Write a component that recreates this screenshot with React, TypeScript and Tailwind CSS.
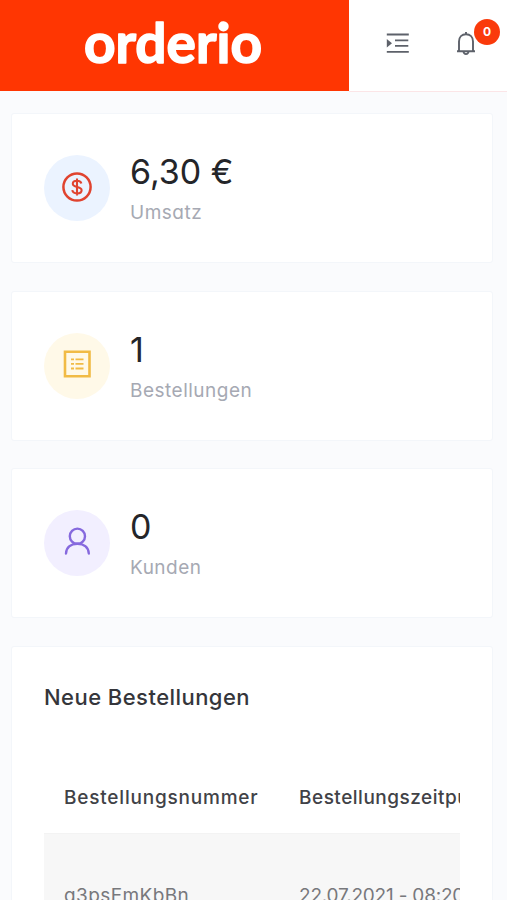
import React from 'react';

interface StatCardProps {
  value: string;
  label: string;
  iconBg: string;
  icon: React.ReactNode;
}

const DollarIcon = () => (
  <svg width="32" height="32" viewBox="0 0 32 32" fill="none" stroke="#e0432f" strokeWidth="2.5">
    <circle cx="16" cy="16" r="13.6" />
    <path d="M20.3 12.5c-.3-1.9-2-2.8-4.3-2.8-2.5 0-4.2 1.1-4.2 3 0 4.5 8.8 2 8.8 6.5 0 2-1.9 3.2-4.5 3.2-2.7 0-4.5-1.1-4.8-3.2M16 7.6v16.8" strokeWidth="2.1" />
  </svg>
);

const ListIcon = () => (
  <svg width="32" height="32" viewBox="0 0 32 32" fill="none" stroke="#f1bb45">
    <path d="M4 3.7h24.5v24.5H4z" strokeWidth="2.6" />
    <path d="M10 11.3h3M10 15.9h3M10 20.5h3M14.5 11.3h8M14.5 15.9h8M14.5 20.5h8" strokeWidth="1.8" />
  </svg>
);

const UserIcon = () => (
  <svg width="32" height="32" viewBox="0 0 32 32" fill="none" stroke="#8669de" strokeWidth="2.4" strokeLinecap="round">
    <circle cx="16.4" cy="10.2" r="7.6" />
    <path d="M5 27.5c.4-6.300 5.100-9.700 11.400-9.700s11 3.400 11.400 9.700" />
  </svg>
);

const IndentIcon = () => (
  <svg width="24" height="24" viewBox="0 0 24 24" fill="none" stroke="#5d616a" strokeWidth="1.8">
    <path d="M.8 3.500h22M9 9.300h13.300M9 14.900h13.300M.8 20.800h22" />
    <path d="M.8 8l5.200 4.200L.8 16.400z" fill="#5d616a" stroke="none" />
  </svg>
);

const BellIcon = () => (
  <svg width="20" height="26" viewBox="0 0 20 26" fill="none" stroke="#5d616a" strokeWidth="1.9">
    <path d="M3 20V10.500C3 6 6 3.200 10 3.200s7 2.800 7 7.300V20M1 20.200h18M10 3.200V1" />
    <path d="M7.500 20.500c.2 1.700 1 2.600 2.500 2.600s2.300-.9 2.500-2.600" />
  </svg>
);

const StatCard: React.FC<StatCardProps> = ({ value, label, iconBg, icon }) => (
  <div className="flex h-[150px] items-center rounded-[3px] border border-[#f3f6fa] bg-white pl-8">
    <div className={`flex size-[66px] items-center justify-center rounded-full pb-[3px] ${iconBg}`}>{icon}</div>
    <div className="ml-5">
      <div className="text-[34px] leading-[42px] text-[#242529]">{value}</div>
      <div className="mt-2 text-[19px] leading-6 tracking-[0.5px] text-[#a6a9b3]">{label}</div>
    </div>
  </div>
);

const STATS: StatCardProps[] = [
  { value: '6,30 €', label: 'Umsatz', iconBg: 'bg-[#ebf3ff]', icon: <DollarIcon /> },
  { value: '1', label: 'Bestellungen', iconBg: 'bg-[#fff9e8]', icon: <ListIcon /> },
  { value: '0', label: 'Kunden', iconBg: 'bg-[#f2efff]', icon: <UserIcon /> },
];

const Header = () => (
  <header className="flex h-[92px]">
    <div className="flex h-[91px] w-[349px] shrink-0 justify-center bg-[#ff3602] pt-[13px]">
      <svg
        width="179"
        height="60"
        className="overflow-visible fill-white stroke-white font-[Lato] text-[56px] font-bold"
        strokeWidth="1.6"
        strokeLinejoin="round"
      >
        <text x="-1" y="50" textLength="178" lengthAdjust="spacingAndGlyphs">orderio</text>
      </svg>
    </div>
    <div className="flex flex-1 border-b border-[#fbe5e7] bg-white pt-[31px] pl-[37px]">
      <IndentIcon />
      <div className="relative ml-[46px] h-[26px] w-5">
        <BellIcon />
        <span className="absolute -top-3 left-[18px] flex size-[26px] items-center justify-center rounded-full bg-[#fa3a0b] pb-px text-xs font-bold text-white">
          0
        </span>
      </div>
    </div>
  </header>
);

const App = () => (
  <div className="h-[900px] w-[507px] overflow-hidden bg-[#fafbfd] font-[Inter,sans-serif] [font-feature-settings:'cv11']">
    <Header />
    <main className="flex flex-col gap-[27.5px] pt-[21px] pr-[14px] pl-[11px]">
      {STATS.map((stat) => (
        <StatCard key={stat.label} {...stat} />
      ))}
      <section className="h-[300px] rounded-[3px] border border-[#f3f6fa] bg-white px-8">
        <h2 className="pt-[34px] text-[22px] leading-8 font-[450] tracking-[0.45px] text-[#35363b]">Neue Bestellungen</h2>
        <div className="mt-[60px] overflow-hidden">
          <div className="flex h-[60px] items-center pb-[9px] pl-[20px] text-[19px] font-[450] whitespace-nowrap text-[#414247]">
            <div className="w-[235px] shrink-0 tracking-[0.8px]">Bestellungsnummer</div>
            <div className="tracking-[0.5px]">Bestellungszeitpunkt</div>
          </div>
          <div className="flex h-[126px] items-center border-t border-[#f3f3f3] bg-[#f7f7f7] pl-[20px] text-[19px] whitespace-nowrap text-[#77787c]">
            <div className="w-[235px] shrink-0 tracking-[0.4px]">q3psEmKbBn</div>
            <div className="tracking-[-0.2px]">22.07.2021 - 08:20</div>
          </div>
        </div>
      </section>
    </main>
  </div>
);

export default App;
